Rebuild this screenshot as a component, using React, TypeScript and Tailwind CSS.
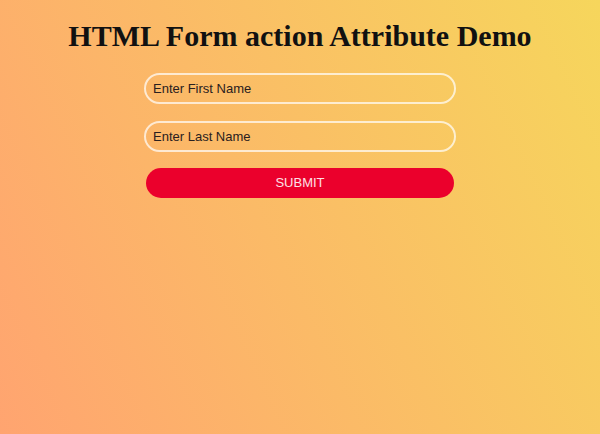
export default function App() {
  return (
    <div className="min-h-[434px] w-full bg-[linear-gradient(65deg,#ffa470_0%,#f6d65c_100%)] font-['Liberation_Sans',Arial,sans-serif]">
      <h1 className="pt-[18px] text-center font-['Liberation_Serif','Times_New_Roman',serif] text-[30px] font-bold leading-[35px] text-[#111]">
        HTML Form action Attribute Demo
      </h1>
      <form className="mx-auto mt-[20px] flex w-[312px] flex-col items-center" onSubmit={(e) => e.preventDefault()}>
        <input
          type="text"
          placeholder="Enter First Name"
          className="h-[31px] w-[312px] rounded-full border-2 border-white/70 bg-transparent px-[7px] text-[13px] text-[#222] placeholder:text-[#2a2020] outline-none"
        />
        <input
          type="text"
          placeholder="Enter Last Name"
          className="mt-[17px] h-[31px] w-[312px] rounded-full border-2 border-white/70 bg-transparent px-[7px] text-[13px] text-[#222] placeholder:text-[#2a2020] outline-none"
        />
        <button
          type="submit"
          className="mt-[16px] h-[30px] w-[308px] rounded-full bg-[#eb002c] text-[13px] text-[#fde0e6]"
        >
          SUBMIT
        </button>
      </form>
    </div>
  );
}
